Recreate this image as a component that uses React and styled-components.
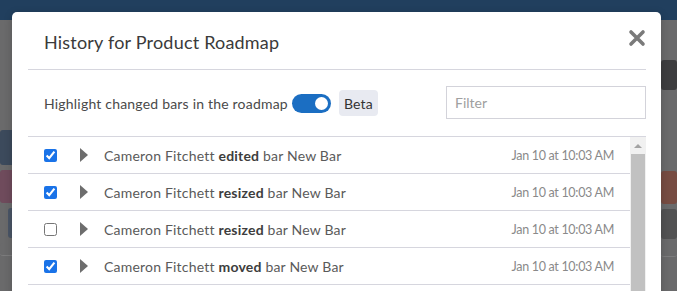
import React from "react";
import styled, { createGlobalStyle } from "styled-components";

const GlobalStyle = createGlobalStyle`
  html, body {
    margin: 0;
    padding: 0;
  }
  body {
    font-family: Lato, "Open Sans", sans-serif;
    overflow: hidden;
  }
`;

const Page = styled.div`
  position: relative;
  width: 677px;
  height: 291px;
  overflow: hidden;
  background: #6a6a6b;
  display: flex;
  flex-direction: column;
`;

const TopBar = styled.div`
  height: 20px;
  background: #213f5e;
  flex: none;
`;

const Backdrop = styled.div`
  flex: 1;
  display: flex;
  justify-content: space-between;
`;

const SideColumn = styled.div`
  width: 16px;
  display: flex;
  flex-direction: column;
  padding-top: ${p => p.$top}px;
  gap: 5px;
`;

const Block = styled.div`
  flex: none;
  height: ${p => p.$h}px;
  background: ${p => p.$bg};
  border-radius: 3px;
  margin-left: ${p => p.$ml || 0}px;
  border-bottom: ${p => (p.$line ? "1px solid #7c7c7d" : "none")};
`;

const Modal = styled.div`
  position: absolute;
  left: 12px;
  top: 12px;
  width: 649px;
  height: 300px;
  background: #fff;
  border-radius: 5px;
  box-shadow: 0 2px 8px rgba(0, 0, 0, 0.2);
  padding: 0 15px 0 16px;
  box-sizing: border-box;
  display: flex;
  flex-direction: column;
`;

const Header = styled.div`
  flex: none;
  display: flex;
  align-items: center;
  justify-content: space-between;
  height: 57px;
  border-bottom: 1px solid #d6d6de;
  padding: 0 0 0 16px;
`;

const Title = styled.h2`
  margin: 0;
  font-size: 18px;
  letter-spacing: 0.2px;
  font-weight: 400;
  color: #3a3a3a;
  padding-top: 3px;
`;

const Close = styled.button`
  border: none;
  background: transparent;
  padding: 0;
  margin: -6px 0 0 0;
  width: 18px;
  height: 18px;
  cursor: pointer;
  display: flex;
`;

const Toolbar = styled.div`
  flex: none;
  display: flex;
  align-items: center;
  height: 66px;
  padding-left: 16px;
  border-bottom: 1px solid #d6d6de;
`;

const ToolbarLabel = styled.span`
  font-size: 14px;
  letter-spacing: 0.2px;
  color: #4a4a4a;
`;

const Toggle = styled.span`
  width: 39px;
  height: 19px;
  border-radius: 10px;
  background: #1b6ec2;
  margin-left: 4px;
  position: relative;
  display: inline-block;
  &::after {
    content: "";
    position: absolute;
    right: 3px;
    top: 3px;
    width: 13px;
    height: 13px;
    border-radius: 50%;
    background: #fff;
  }
`;

const Chip = styled.span`
  margin-left: 8px;
  padding: 5px 5px 4px;
  background: #e8eaf1;
  border-radius: 4px;
  font-size: 14px;
  letter-spacing: 0.2px;
  color: #333;
`;

const FilterInput = styled.input`
  margin-left: auto;
  width: 200px;
  height: 33px;
  box-sizing: border-box;
  border: 1px solid #d3d3da;
  padding: 0 8px;
  font-family: inherit;
  font-size: 14px;
  margin-top: -1px;
  &::placeholder {
    color: #a0a0a0;
  }
`;

const ListArea = styled.div`
  display: grid;
  grid-template-columns: 1fr 16px;
  flex: 1;
`;

const List = styled.div`
  display: flex;
  flex-direction: column;
`;

const Row = styled.div`
  flex: none;
  display: flex;
  align-items: center;
  height: 36px;
  border-bottom: 1px solid #d6d6de;
  padding-left: 16px;
  padding-right: 16px;
`;

const Check = styled.input`
  margin: 0;
  width: 13px;
  height: 13px;
  accent-color: #1a73e8;
`;

const Caret = styled.span`
  margin-left: 23px;
  width: 0;
  height: 0;
  border-top: 7px solid transparent;
  border-bottom: 7px solid transparent;
  border-left: 8px solid #6d6d6d;
`;

const Message = styled.span`
  margin-left: 16px;
  font-size: 14px;
  letter-spacing: 0.2px;
  color: #5a5a5a;
  b {
    font-weight: 700;
    color: #3d3d3d;
  }
`;

const Stamp = styled.span`
  margin-left: auto;
  font-size: 12.5px;
  letter-spacing: -0.3px;
  color: #8a8a8a;
`;

const Scrollbar = styled.div`
  background: #f1f1f1;
  display: flex;
  flex-direction: column;
  align-items: stretch;
  padding: 0 1px;
`;

const ScrollArrow = styled.div`
  height: 17px;
  display: flex;
  justify-content: center;
  align-items: center;
  &::before {
    content: "";
    border-left: 4px solid transparent;
    border-right: 4px solid transparent;
    border-bottom: 4px solid #a3a3a3;
  }
`;

const Thumb = styled.div`
  flex: 1;
  background: #c1c1c1;
`;

const rows = [
  { checked: true, verb: "edited" },
  { checked: true, verb: "resized" },
  { checked: false, verb: "resized" },
  { checked: true, verb: "moved" },
];

export default function App() {
  return (
    <>
      <GlobalStyle />
      <Page>
        <TopBar />
        <Backdrop>
          <SideColumn $top={110}>
            <Block $h={35} $bg="#3c4a5c" />
            <Block $h={33} $bg="#6f4b5c" />
            <Block $h={30} $bg="#4a5566" $ml={8} />
            <Block $h={12} $bg="#6a6a6b" $line />
          </SideColumn>
          <SideColumn $top={40}>
            <Block $h={30} $bg="#3d3d3f" />
            <Block $h={71} $bg="#6a6a6b" />
            <Block $h={33} $bg="#774c42" />
            <Block $h={30} $bg="#525253" />
            <Block $h={12} $bg="#6a6a6b" $line />
          </SideColumn>
        </Backdrop>
        <Modal>
          <Header>
            <Title>History for Product Roadmap</Title>
            <Close aria-label="Close">
              <svg width="18" height="18" viewBox="0 0 18 18">
                <path d="M3 3 L15 15 M15 3 L3 15" stroke="#7a7a7a" strokeWidth="3.6" strokeLinecap="round" />
              </svg>
            </Close>
          </Header>
          <Toolbar>
            <ToolbarLabel>Highlight changed bars in the roadmap</ToolbarLabel>
            <Toggle />
            <Chip>Beta</Chip>
            <FilterInput placeholder="Filter" />
          </Toolbar>
          <ListArea>
            <List>
              {rows.map((r, i) => (
                <Row key={i}>
                  <Check type="checkbox" defaultChecked={r.checked} />
                  <Caret />
                  <Message>
                    Cameron Fitchett <b>{r.verb}</b> bar New Bar
                  </Message>
                  <Stamp>Jan 10 at 10:03 AM</Stamp>
                </Row>
              ))}
            </List>
            <Scrollbar>
              <ScrollArrow />
              <Thumb />
            </Scrollbar>
          </ListArea>
        </Modal>
      </Page>
    </>
  );
}
